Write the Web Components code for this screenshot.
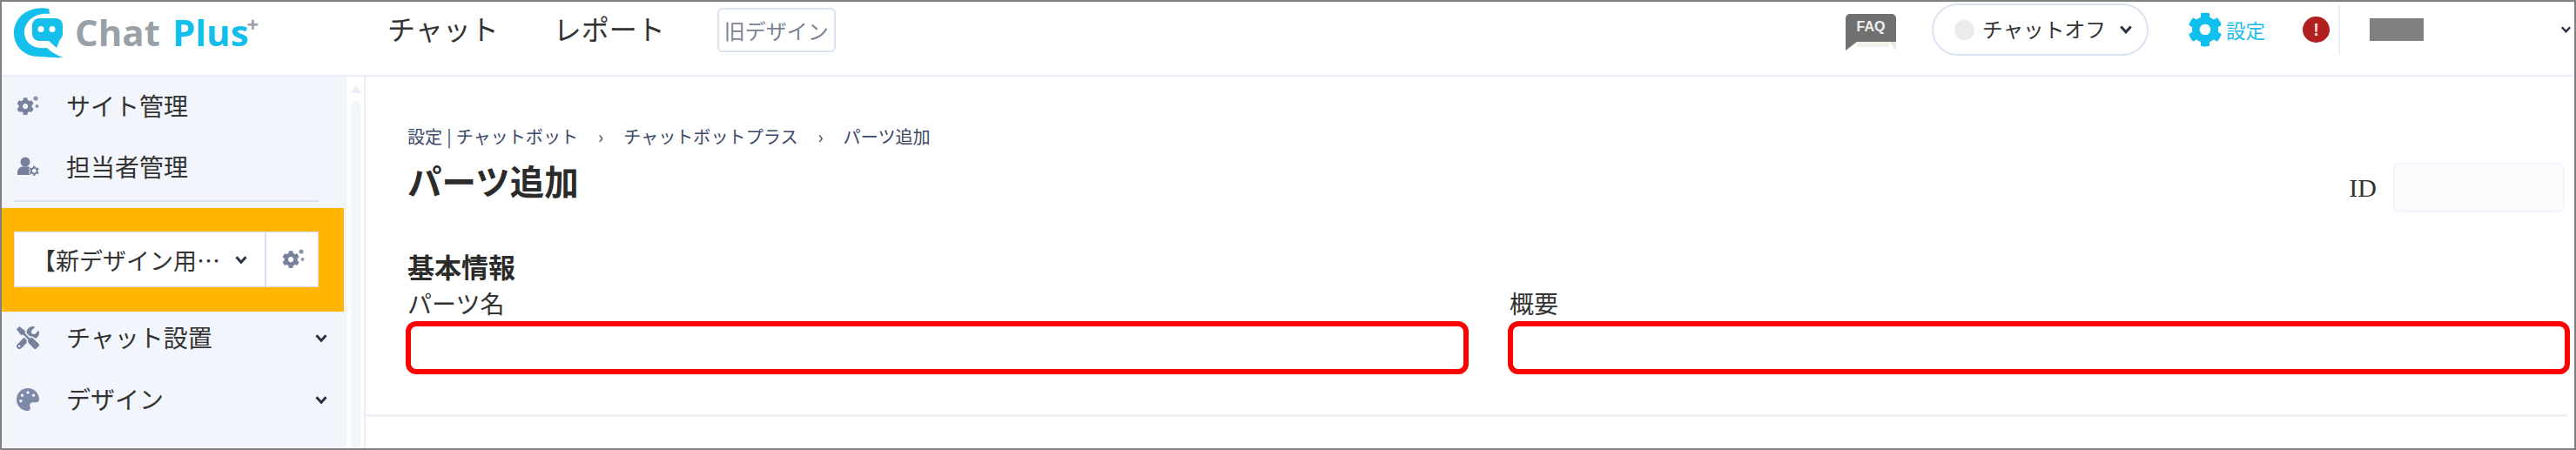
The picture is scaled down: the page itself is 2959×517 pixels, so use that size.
<!DOCTYPE html>
<html lang="ja">
<head>
<meta charset="utf-8">
<title>パーツ追加</title>
<style>
  html, body { margin: 0; padding: 0; background: #fff; }
  body { font-family: "Noto Sans CJK JP", "Noto Sans", sans-serif; color: #333; }
</style>
</head>
<body>
<chat-app>
  <chat-header slot="header"></chat-header>
  <chat-sidebar slot="sidebar"></chat-sidebar>
  <chat-main slot="main"></chat-main>
</chat-app>

<script>
const COG = "M487.4 315.7l-42.6-24.6c4.3-23.2 4.3-47 0-70.2l42.6-24.6c4.9-2.8 7.1-8.6 5.5-14-11.1-35.6-30-67.8-54.7-94.6-3.8-4.1-10-5.1-14.8-2.3L380.8 110c-17.9-15.4-38.5-27.3-60.8-35.1V25.8c0-5.6-3.9-10.5-9.4-11.7-36.7-8.2-74.3-7.8-109.2 0-5.5 1.2-9.4 6.1-9.4 11.7V75c-22.2 7.9-42.8 19.8-60.8 35.1L88.7 85.5c-4.9-2.8-11-1.9-14.8 2.3-24.7 26.7-43.6 58.9-54.7 94.6-1.7 5.4.6 11.2 5.5 14L67.3 221c-4.3 23.2-4.3 47 0 70.2l-42.6 24.6c-4.9 2.8-7.1 8.6-5.5 14 11.1 35.6 30 67.8 54.7 94.6 3.8 4.1 10 5.1 14.8 2.3l42.6-24.6c17.9 15.4 38.5 27.3 60.8 35.1v49.2c0 5.6 3.9 10.5 9.4 11.7 36.7 8.2 74.3 7.8 109.2 0 5.5-1.2 9.4-6.1 9.4-11.7v-49.2c22.2-7.9 42.8-19.8 60.8-35.1l42.6 24.6c4.9 2.8 11 1.9 14.8-2.3 24.7-26.7 43.6-58.9 54.7-94.6 1.5-5.5-.7-11.3-5.6-14.1zM256 336c-44.1 0-80-35.9-80-80s35.9-80 80-80 80 35.9 80 80-35.9 80-80 80z";
const TOOLS = "M501.1 395.7L384 278.6c-23.1-23.1-57.6-27.6-85.4-13.9L192 158.1V96L64 0 0 64l96 128h62.1l106.6 106.6c-13.6 27.8-9.2 62.3 13.9 85.4l117.1 117.1c14.6 14.6 38.2 14.6 52.7 0l52.7-52.7c14.5-14.6 14.5-38.2 0-52.7zM331.7 225c28.3 0 54.9 11 74.9 31l19.4 19.4c15.8-6.9 30.8-16.5 43.8-29.5 37.1-37.1 49.7-89.3 37.9-136.7-2.2-9-13.5-12.1-20.1-5.5l-74.4 74.4-67.9-11.3L334 98.9l74.4-74.4c6.6-6.6 3.4-17.9-5.7-20.2-47.4-11.7-99.6.9-136.6 37.9-28.5 28.5-41.9 66.1-41.2 103.6l82.1 82.1c8.1-1.9 16.5-2.9 24.7-2.9zm-103.9 82l-56.7-56.7L18.7 402.8c-25 25-25 65.5 0 90.5s65.5 25 90.5 0l123.6-123.6c-7.6-19.9-9.9-41.6-5-62.7zM64 472c-13.2 0-24-10.8-24-24 0-13.3 10.7-24 24-24s24 10.7 24 24c0 13.2-10.7 24-24 24z";
const PALETTE = "M204.3 5C104.9 24.4 24.8 104.3 5.2 203.4c-37 187 131.7 326.4 258.8 306.7 41.2-6.4 61.4-54.6 42.5-91.7-23.1-45.4 9.9-98.4 60.9-98.4h79.7c35.8 0 64.8-29.6 64.9-65.3C511.5 97.1 368.1-26.9 204.3 5zM96 320c-17.7 0-32-14.3-32-32s14.3-32 32-32 32 14.3 32 32-14.3 32-32 32zm32-128c-17.7 0-32-14.3-32-32s14.3-32 32-32 32 14.3 32 32-14.3 32-32 32zm128-64c-17.7 0-32-14.3-32-32s14.3-32 32-32 32 14.3 32 32-14.3 32-32 32zm128 64c-17.7 0-32-14.3-32-32s14.3-32 32-32 32 14.3 32 32-14.3 32-32 32z";

const chevron = (w, h, sw) => `<svg width="${w}" height="${h}" viewBox="0 0 14 10" style="display:block;flex:none"><polyline points="2,2 7,7.5 12,2" fill="none" stroke="#2a3142" stroke-width="${sw}"/></svg>`;

// small cog with two sparks, used in the menu and in the site picker
const cogsIcon = `<svg width="26" height="26" viewBox="0 0 26 26" style="display:block">
  <g transform="translate(0 3) scale(.0395)"><path fill="#77819c" d="${COG}"/></g>
  <circle cx="22" cy="4" r="2.6" fill="#8b95ae"/><circle cx="23.5" cy="13" r="2" fill="#8b95ae"/></svg>`;

const ICONS = {
  cogs: cogsIcon,
  user: `<svg width="26" height="26" viewBox="0 0 26 26" style="display:block">
    <circle cx="10" cy="7" r="5.5" fill="#77819c"/>
    <path d="M1 22v-3c0-4 3-6.5 6-6.5h6c1.5 0 2.5.5 3 1v8.5z" fill="#77819c"/>
    <g transform="translate(14 11) scale(.0245)"><path fill="#77819c" stroke="#f2f5fb" stroke-width="40" d="${COG}"/></g></svg>`,
  tools: `<svg width="26" height="26" viewBox="0 0 512 512" style="display:block"><path fill="#77819c" d="${TOOLS}"/></svg>`,
  palette: `<svg width="26" height="26" viewBox="0 0 512 512" style="display:block"><path fill="#7f8aa8" d="${PALETTE}"/></svg>`
};

class ChatApp extends HTMLElement {
  constructor() {
    super();
    this.attachShadow({ mode: "open" });
  }

  connectedCallback() {
    this.shadowRoot.innerHTML = `
      <style>
        :host {
          display: flex;
          flex-direction: column;
          box-sizing: border-box;
          width: 2959px;
          height: 517px;
          overflow: hidden;
          border: 2px solid #808080;
          background: #fff;
        }
        .body { display: flex; flex: 1; min-height: 0; }
      </style>
      <slot name="header"></slot>
      <div class="body">
        <slot name="sidebar"></slot>
        <slot name="main"></slot>
      </div>
    `;
  }
}

class ChatHeader extends HTMLElement {
  constructor() {
    super();
    this.attachShadow({ mode: "open" });
  }

  connectedCallback() {
    this.shadowRoot.innerHTML = `
      <style>
        :host {
          display: flex;
          align-items: center;
          box-sizing: border-box;
          height: 86px;
          padding: 0 3px 20px 14px;
          border-bottom: 2px solid #e8edf7;
          font-family: "Noto Sans CJK JP", sans-serif;
        }
        .logo { display: flex; align-items: flex-start; width: 429px; flex: none; margin-top: 8px; }
        .logo svg { display: block; flex: none; }
        .word {
          font: 700 42px/56px "Open Sans", sans-serif;
          margin-left: 14px;
          color: #98a1a8;
          white-space: nowrap;
        }
        .word b { font-weight: 700; color: #14bfec; margin-left: 3px; }
        .word sup { font-size: 24px; font-weight: 700; line-height: 0; color: #98a1a8; vertical-align: 16px; margin-left: -2px; }
        .nav { font-size: 32px; line-height: 40px; color: #333; margin-right: 63px; margin-top: -5px; white-space: nowrap; }
        .old {
          box-sizing: border-box;
          width: 136px;
          height: 51px;
          margin-left: -3px;
          border: 2px solid #dbe3f2;
          border-radius: 6px;
          font-size: 24px;
          line-height: 47px;
          text-align: center;
          color: #7c8494;
          white-space: nowrap;
        }
        .right { display: flex; align-items: center; margin-left: auto; }
        .faq { width: 58px; flex: none; margin-top: 6px; }
        .faq div {
          height: 32px;
          background: #707070;
          border-radius: 5px 5px 0 0;
          color: #eee;
          font: 700 16px/30px "Liberation Sans", sans-serif;
          text-align: center;
        }
        .faq svg { display: block; }
        .pill {
          box-sizing: border-box;
          display: flex;
          align-items: center;
          width: 249px;
          height: 60px;
          margin-left: 41px;
          padding-left: 24px;
          border: 2px solid #dbe3f2;
          border-radius: 30px;
          font-size: 23.7px;
          line-height: 50px;
          white-space: nowrap;
        }
        .t { margin-bottom: 2px; }
        .dot { width: 23px; height: 23px; border-radius: 50%; background: #ebebeb; margin-right: 9px; flex: none; }
        .pill svg { margin-left: 15px; }
        .gear { margin-left: 45px; display: block; flex: none; }
        .setting { margin-left: 4px; font-size: 22.5px; line-height: 30px; color: #19bdea; white-space: nowrap; }
        .alert {
          width: 31px;
          height: 30px;
          margin-left: 43px;
          border-radius: 50%;
          background: #b21f1f;
          color: #f6dcdc;
          font: 700 20px/30px "Liberation Sans", sans-serif;
          text-align: center;
          flex: none;
        }
        .sep { width: 2px; height: 58px; margin-left: 10px; background: #e8edf7; flex: none; }
        .who { width: 62px; height: 26px; margin-left: 34px; background: #808080; flex: none; }
        .right > svg:last-child { margin-left: 157px; }
      </style>
      <div class="logo">
        <svg width="56" height="58" viewBox="0 0 56 58">
          <path fill="#14bfec" d="M40 1C18-3 0 10 0 29c0 15 12 27 28 27 10 0 20 2 28 1-8-3-14-7-18-11-16 2-26-6-26-18C12 16 24 5 41 7z"/>
          <rect x="21" y="12" width="35" height="26" rx="8" fill="#14bfec"/>
          <polygon points="38,36 53,36 49,46" fill="#14bfec"/>
          <circle cx="31" cy="24.5" r="3.5" fill="#fff"/>
          <circle cx="44" cy="24.5" r="3.5" fill="#fff"/>
        </svg>
        <div class="word">Chat <b>Plus</b><sup>+</sup></div>
      </div>
      <div class="nav">チャット</div>
      <div class="nav">レポート</div>
      <div class="old">旧デザイン</div>
      <div class="right">
        <div class="faq">
          <div>FAQ</div>
          <svg width="58" height="10" viewBox="0 0 58 10">
            <polygon points="13,0 50,0 50,6 13,6" fill="#f1f1ea"/>
            <polygon points="50,0 58,0 58,10" fill="#e8e8df"/>
            <polygon points="0,0 13,0 0,10" fill="#707070"/>
          </svg>
        </div>
        <div class="pill"><span class="dot"></span><span class="t">チャットオフ</span>${chevron(16, 12, 2.6)}</div>
        <svg class="gear" width="40" height="40" viewBox="0 0 512 512"><path fill="#0fc0ec" d="${COG}"/></svg>
        <div class="setting">設定</div>
        <div class="alert">!</div>
        <div class="sep"></div>
        <div class="who"></div>
        ${chevron(13, 10, 2.6)}
      </div>
    `;
  }
}

class SideItem extends HTMLElement {
  constructor() {
    super();
    this.attachShadow({ mode: "open" });
  }

  connectedCallback() {
    const icon = ICONS[this.getAttribute("icon")] || "";
    const seta = this.hasAttribute("open-menu") ? chevron(16, 11, 2.6) : "";
    this.shadowRoot.innerHTML = `
      <style>
        :host {
          display: flex;
          align-items: center;
          box-sizing: border-box;
          height: 70px;
          padding: 0 21px 2px 17px;
          font-size: 28px;
          color: #333;
        }
        .icon { width: 26px; flex: none; margin-right: 31px; }
        .text { flex: 1; white-space: nowrap; line-height: 40px; margin-top: -3px; }
      </style>
      <span class="icon">${icon}</span>
      <span class="text"><slot></slot></span>
      ${seta}
    `;
  }
}

class SitePicker extends HTMLElement {
  constructor() {
    super();
    this.attachShadow({ mode: "open" });
  }

  connectedCallback() {
    this.shadowRoot.innerHTML = `
      <style>
        :host {
          display: block;
          box-sizing: border-box;
          width: 393px;
          height: 119px;
          padding: 27px 0 0 14px;
          background: #ffb600;
        }
        .box {
          box-sizing: border-box;
          display: flex;
          width: 350px;
          height: 64px;
          background: #fff;
          border: 1px solid #d5dff0;
        }
        .name {
          display: flex;
          align-items: center;
          width: 289px;
          padding-left: 20px;
          box-sizing: border-box;
          border-right: 2px solid #d5dff0;
          font-size: 27px;
          white-space: nowrap;
        }
        .name svg { margin-left: 16px; }
        .cog { flex: 1; display: flex; align-items: center; justify-content: center; padding-left: 2px; }
      </style>
      <div class="box">
        <div class="name"><slot></slot>${chevron(16, 11, 2.6)}</div>
        <div class="cog">${cogsIcon}</div>
      </div>
    `;
  }
}

class ChatSidebar extends HTMLElement {
  constructor() {
    super();
    this.attachShadow({ mode: "open" });
  }

  connectedCallback() {
    this.shadowRoot.innerHTML = `
      <style>
        :host {
          display: flex;
          flex: none;
          box-sizing: border-box;
          width: 418px;
          border-right: 2px solid #e8edf7;
        }
        .menu { width: 396px; flex: none; background: #f2f5fb; }
        hr { width: 350px; height: 2px; margin: 2px 0 7px 14px; border: 0; background: #d7e0f1; }
        .rest { display: flex; flex-direction: column; gap: 1px; margin-top: -4px; }
        .bar { width: 11px; margin-left: 5px; flex: none; padding-top: 10px; }
        .up { width: 0; height: 0; margin: 0 auto; border: 6px solid transparent; border-top: 0; border-bottom: 9px solid #e9eef8; }
        .track { height: 100%; margin-top: 9px; border-radius: 6px 6px 0 0; background: #f2f5fb; }
      </style>
      <div class="menu">
        <side-item icon="cogs">サイト管理</side-item>
        <side-item icon="user">担当者管理</side-item>
        <hr>
        <site-picker>【新デザイン用…</site-picker>
        <div class="rest">
          <side-item icon="tools" open-menu>チャット設置</side-item>
          <side-item icon="palette" open-menu>デザイン</side-item>
        </div>
      </div>
      <div class="bar"><div class="up"></div><div class="track"></div></div>
    `;
  }
}

class FormField extends HTMLElement {
  constructor() {
    super();
    this.attachShadow({ mode: "open" });
  }

  connectedCallback() {
    this.shadowRoot.innerHTML = `
      <style>
        :host { display: block; }
        label { display: block; height: 36px; padding-left: 2px; font-size: 28px; line-height: 34px; color: #333; }
        .input {
          box-sizing: border-box;
          height: 61px;
          margin-top: 2px;
          border: 6px solid #ff0000;
          border-radius: 12px;
          background: #fff;
        }
      </style>
      <label><slot></slot></label>
      <div class="input"></div>
    `;
  }
}

class ChatMain extends HTMLElement {
  constructor() {
    super();
    this.attachShadow({ mode: "open" });
  }

  connectedCallback() {
    this.shadowRoot.innerHTML = `
      <style>
        :host { display: block; flex: 1; min-width: 0; }
        .crumb {
          height: 30px;
          margin: 55px 0 0 48px;
          font-size: 20.1px;
          line-height: 27px;
          color: #3a4766;
          white-space: nowrap;
        }
        .crumb u { text-decoration: none; margin: 0 5px; }
        .crumb i { font-style: normal; margin: 0 23px; }
        .row {
          display: flex;
          justify-content: space-between;
          height: 60px;
          margin-top: 11px;
          padding: 0 11px 0 48px;
        }
        h1 { margin: -2px 0 0; font-size: 39.5px; line-height: 50px; font-weight: 700; color: #2b2b2b; }
        .id { display: flex; align-items: center; gap: 19px; height: 57px; margin-top: 3px; font: 30px "Liberation Serif", serif; color: #333; }
        .id span {
          box-sizing: border-box;
          display: block;
          width: 197px;
          height: 57px;
          background: #fafbfd;
          border: 2px solid #f2f5fb;
          border-radius: 7px;
        }
        h2 { height: 36px; margin: 45px 0 6px 48px; font-size: 31px; line-height: 34px; font-weight: 700; color: #2b2b2b; }
        .fields {
          display: grid;
          grid-template-columns: 1221px 1220px;
          gap: 45px;
          padding-left: 46px;
        }
        .line { height: 3px; margin: 46px 8px 0 0; background: #eef1f6; }
      </style>
      <div class="crumb">設定<u>|</u>チャットボット<i>›</i>チャットボットプラス<i>›</i>パーツ追加</div>
      <div class="row">
        <h1>パーツ追加</h1>
        <div class="id">ID<span></span></div>
      </div>
      <h2>基本情報</h2>
      <div class="fields">
        <form-field>パーツ名</form-field>
        <form-field>概要</form-field>
      </div>
      <div class="line"></div>
    `;
  }
}

customElements.define("side-item", SideItem);
customElements.define("site-picker", SitePicker);
customElements.define("form-field", FormField);
customElements.define("chat-header", ChatHeader);
customElements.define("chat-sidebar", ChatSidebar);
customElements.define("chat-main", ChatMain);
customElements.define("chat-app", ChatApp);
</script>
</body>
</html>
